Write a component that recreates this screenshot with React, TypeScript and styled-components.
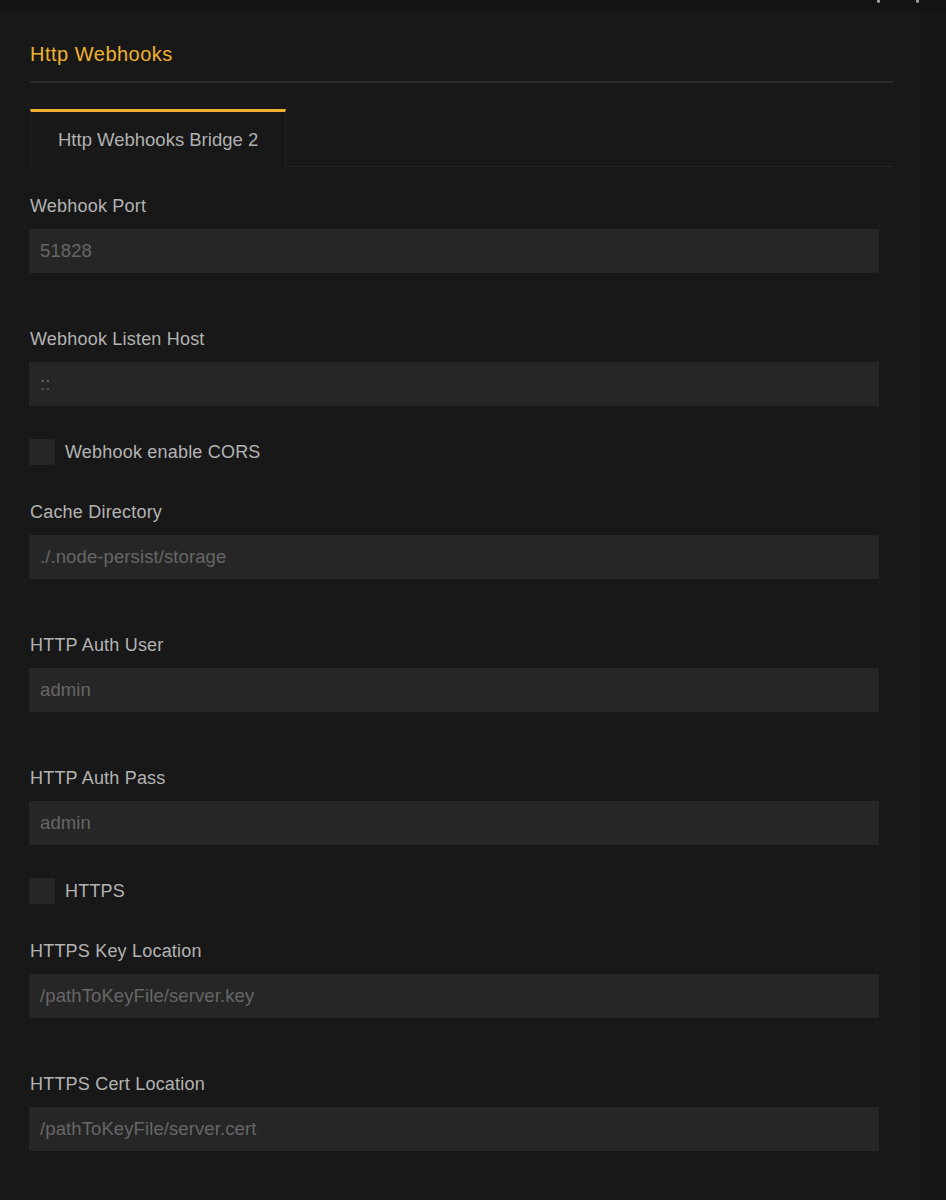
import styled, { createGlobalStyle } from "styled-components";

const GlobalStyle = createGlobalStyle`
  html, body {
    margin: 0;
    padding: 0;
    background: #161616;
  }
  body {
    font-family: "Liberation Sans", Arial, Helvetica, sans-serif;
  }
`;

const Page = styled.div`
  width: 946px;
  min-height: 1200px;
  background: #161616;
`;

const TopStrip = styled.div`
  height: 12px;
  width: 946px;
  background: #141414;
  display: flex;
  justify-content: flex-end;
  gap: 36px;
  padding-right: 27px;
  box-sizing: border-box;
`;

const StripMark = styled.span`
  width: 3px;
  height: 3px;
  background: #9a9a9a;
  border-radius: 0 0 2px 2px;
`;

const Panel = styled.div`
  width: 920px;
  min-height: 1188px;
  background: #181818;
  padding: 30px 27px 0 30px;
  box-sizing: border-box;
`;

const Title = styled.h2`
  margin: 0;
  font-size: 20px;
  line-height: 24px;
  font-weight: normal;
  letter-spacing: 0.5px;
  color: #f0b22e;
  padding-bottom: 15px;
  border-bottom: 2px solid #2a2a2a;
`;

const TabBar = styled.div`
  margin-top: 26px;
  display: flex;
  border-bottom: 1px solid #262626;
`;

const Tab = styled.div`
  border-top: 3px solid #f0b030;
  border-left: 1px solid #232323;
  border-right: 1px solid #232323;
  margin-bottom: -1px;
  background: #181818;
  padding: 0 27px;
  height: 55px;
  display: flex;
  align-items: center;
  font-size: 18.5px;
  color: #b0b0b0;
`;

const Form = styled.div`
  width: 850px;
  margin-left: -1px;
  padding-top: 27px;
  display: flex;
  flex-direction: column;
`;

const Field = styled.div<{ $gap: number }>`
  margin-top: ${(p) => p.$gap}px;
  display: flex;
  flex-direction: column;
`;

const Label = styled.label`
  font-size: 18px;
  line-height: 24px;
  letter-spacing: 0.2px;
  color: #b3b3b3;
  padding-left: 1px;
`;

const Input = styled.div`
  margin-top: 11px;
  height: 44px;
  background: #262626;
  padding-left: 11px;
  display: flex;
  align-items: center;
  font-size: 18.5px;
  letter-spacing: 0.1px;
  color: #666666;
`;

const CheckRow = styled.div<{ $gap: number }>`
  margin-top: ${(p) => p.$gap}px;
  display: flex;
  align-items: center;
  gap: 9px;
`;

const Box = styled.span`
  width: 26px;
  height: 26px;
  background: #262626;
`;

type Item =
  | { kind: "text"; label: string; value: string; gap: number }
  | { kind: "check"; label: string; gap: number };

const items: Item[] = [
  { kind: "text", label: "Webhook Port", value: "51828", gap: 0 },
  { kind: "text", label: "Webhook Listen Host", value: "::", gap: 54 },
  { kind: "check", label: "Webhook enable CORS", gap: 33 },
  { kind: "text", label: "Cache Directory", value: "./.node-persist/storage", gap: 35 },
  { kind: "text", label: "HTTP Auth User", value: "admin", gap: 54 },
  { kind: "text", label: "HTTP Auth Pass", value: "admin", gap: 54 },
  { kind: "check", label: "HTTPS", gap: 33 },
  { kind: "text", label: "HTTPS Key Location", value: "/pathToKeyFile/server.key", gap: 35 },
  { kind: "text", label: "HTTPS Cert Location", value: "/pathToKeyFile/server.cert", gap: 54 },
];

const App = () => {
  return (
    <Page>
      <GlobalStyle />
      <TopStrip>
        <StripMark />
        <StripMark />
      </TopStrip>
      <Panel>
        <Title>Http Webhooks</Title>
        <TabBar>
          <Tab>Http Webhooks Bridge 2</Tab>
        </TabBar>
        <Form>
          {items.map((item) =>
            item.kind === "text" ? (
              <Field key={item.label} $gap={item.gap}>
                <Label>{item.label}</Label>
                <Input>{item.value}</Input>
              </Field>
            ) : (
              <CheckRow key={item.label} $gap={item.gap}>
                <Box />
                <Label>{item.label}</Label>
              </CheckRow>
            )
          )}
        </Form>
      </Panel>
    </Page>
  );
};

export default App;
